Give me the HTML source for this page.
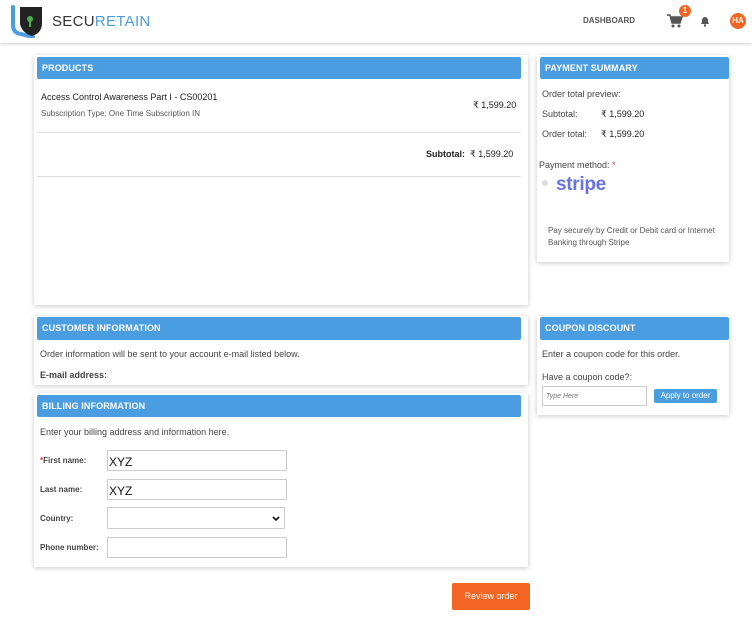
<!DOCTYPE html>
<html><head><meta charset="utf-8"><style>
*{margin:0;padding:0;box-sizing:border-box}
body{width:752px;height:617px;background:#fff;font-family:"Liberation Sans",Arial,sans-serif;position:relative;overflow:hidden;color:#333}
.a{position:absolute}
.hdr{left:0;top:0;width:752px;height:43px;background:#fff;box-shadow:0 1px 3px rgba(0,0,0,.2)}
.card{background:#fff;box-shadow:0 1px 5px rgba(0,0,0,.22)}
.bar{background:#4a9de0;color:#fff;font-size:9px;font-weight:bold;padding-left:5px;line-height:22px;border-radius:2px;letter-spacing:.1px}
.t{font-size:9px;color:#444;white-space:nowrap}
.inp{border:1px solid #ccc;background:#fff}
.lbl{font-size:8px;font-weight:bold;color:#444}
</style></head><body>
<div class="a hdr"></div>
<svg class="a" style="left:10px;top:4px" width="40" height="34" viewBox="0 0 40 34">
<path d="M3 3 v18 q0 8 8 9 l12 3" stroke="#4a9de0" stroke-width="4" fill="none" stroke-linecap="round"/>
<path d="M10 3 h22 v16 q0 10 -10 13 q-10 -3 -12 -12 z" fill="#222"/>
<circle cx="20" cy="15" r="3" fill="#4caf50"/><rect x="19" y="16" width="2" height="7" fill="#4caf50"/>
</svg>
<div class="a" style="left:52px;top:13px;font-size:15px;color:#333;letter-spacing:.3px">SECU<span style="color:#4a9de0">RETAIN</span></div>
<div class="a" style="left:583px;top:16px;font-size:8px;font-weight:bold;color:#555">DASHBOARD</div>
<svg class="a" style="left:667px;top:14px" width="16" height="14" viewBox="0 0 16 14"><path d="M0 1h3l2 8h8l2-6H4" fill="#555" stroke="#555" stroke-width="1.5"/><circle cx="6" cy="12" r="1.5" fill="#555"/><circle cx="12" cy="12" r="1.5" fill="#555"/></svg>
<div class="a" style="left:679px;top:5px;width:12px;height:12px;border-radius:50%;background:#f26522;color:#fff;font-size:8px;font-weight:bold;text-align:center;line-height:12px">1</div>
<svg class="a" style="left:700px;top:16px" width="10" height="11" viewBox="0 0 10 11"><path d="M1 8h8l-1-2V4a3 3 0 0 0-6 0v2z" fill="#555"/><circle cx="5" cy="9.5" r="1.2" fill="#555"/></svg>
<div class="a" style="left:730px;top:13px;width:16px;height:16px;border-radius:50%;background:#f26522;color:#fff;font-size:8px;font-weight:bold;text-align:center;line-height:16px">HA</div>

<div class="a card" style="left:34px;top:55px;width:494px;height:250px"></div>
<div class="a bar" style="left:37px;top:57px;width:484px">PRODUCTS</div>
<div class="a t" style="left:41px;top:92px;color:#222">Access Control Awareness Part I - CS00201</div>
<div class="a t" style="left:41px;top:109px;font-size:8px;color:#555">Subscription Type: One Time Subscription IN</div>
<div class="a t" style="left:473px;top:100px;color:#222">₹ 1,599.20</div>
<div class="a" style="left:37px;top:132px;width:484px;height:1px;background:#ddd"></div>
<div class="a t" style="left:426px;top:149px;color:#222"><b>Subtotal:</b>&nbsp;&nbsp;₹ 1,599.20</div>
<div class="a" style="left:37px;top:176px;width:484px;height:1px;background:#ddd"></div>

<div class="a card" style="left:537px;top:55px;width:192px;height:207px"></div>
<div class="a bar" style="left:540px;top:57px;width:189px">PAYMENT SUMMARY</div>
<div class="a t" style="left:542px;top:89px">Order total preview:</div>
<div class="a t" style="left:542px;top:109px">Subtotal:</div><div class="a t" style="left:601px;top:109px;color:#222">₹ 1,599.20</div>
<div class="a t" style="left:542px;top:129px">Order total:</div><div class="a t" style="left:601px;top:129px;color:#222">₹ 1,599.20</div>
<div class="a t" style="left:539px;top:160px">Payment method: <span style="color:#e33">*</span></div>
<div class="a" style="left:542px;top:180px;width:6px;height:6px;border-radius:50%;background:#ddd"></div>
<div class="a" style="left:556px;top:174px;font-size:19px;font-weight:bold;color:#6772e5;letter-spacing:-.3px">stripe</div>
<div class="a t" style="left:548px;top:225px;font-size:8px;line-height:12px;color:#555">Pay securely by Credit or Debit card or Internet<br>Banking through Stripe</div>

<div class="a card" style="left:34px;top:316px;width:494px;height:69px"></div>
<div class="a bar" style="left:37px;top:317px;width:484px;line-height:23px">CUSTOMER INFORMATION</div>
<div class="a t" style="left:40px;top:349px">Order information will be sent to your account e-mail listed below.</div>
<div class="a t" style="left:40px;top:370px;font-weight:bold">E-mail address:</div>

<div class="a card" style="left:34px;top:393px;width:494px;height:174px"></div>
<div class="a bar" style="left:37px;top:395px;width:484px">BILLING INFORMATION</div>
<div class="a t" style="left:40px;top:427px">Enter your billing address and information here.</div>
<div class="a lbl" style="left:40px;top:456px"><span style="color:#e33">*</span>First name:</div>
<div class="a inp" style="left:107px;top:450px;width:180px;height:21px;font-size:12px;padding:4px 0 0 1px;color:#111">XYZ</div>
<div class="a lbl" style="left:40px;top:485px">Last name:</div>
<div class="a inp" style="left:107px;top:479px;width:180px;height:21px;font-size:12px;padding:4px 0 0 1px;color:#111">XYZ</div>
<div class="a lbl" style="left:40px;top:514px">Country:</div>
<div class="a inp" style="left:107px;top:507px;width:178px;height:22px"></div>
<svg class="a" style="left:272px;top:516px" width="8" height="6" viewBox="0 0 8 6"><path d="M1 1l3 3 3-3" stroke="#111" stroke-width="1.6" fill="none"/></svg>
<div class="a lbl" style="left:40px;top:543px">Phone number:</div>
<div class="a inp" style="left:107px;top:537px;width:180px;height:21px"></div>

<div class="a card" style="left:537px;top:316px;width:192px;height:99px"></div>
<div class="a bar" style="left:540px;top:317px;width:189px;line-height:23px">COUPON DISCOUNT</div>
<div class="a t" style="left:542px;top:349px">Enter a coupon code for this order.</div>
<div class="a t" style="left:542px;top:372px">Have a coupon code?:</div>
<div class="a inp" style="left:542px;top:386px;width:105px;height:20px;font-size:7px;font-style:italic;color:#777;padding:6px 0 0 3px">Type Here</div>
<div class="a" style="left:654px;top:389px;width:63px;height:14px;background:#4a9de0;border-radius:2px;color:#fff;font-size:8px;text-align:center;line-height:14px">Apply to order</div>

<div class="a" style="left:452px;top:583px;width:78px;height:27px;background:#f26522;border-radius:2px;color:#fff;font-size:9px;text-align:center;line-height:27px">Review order</div>
</body></html>
